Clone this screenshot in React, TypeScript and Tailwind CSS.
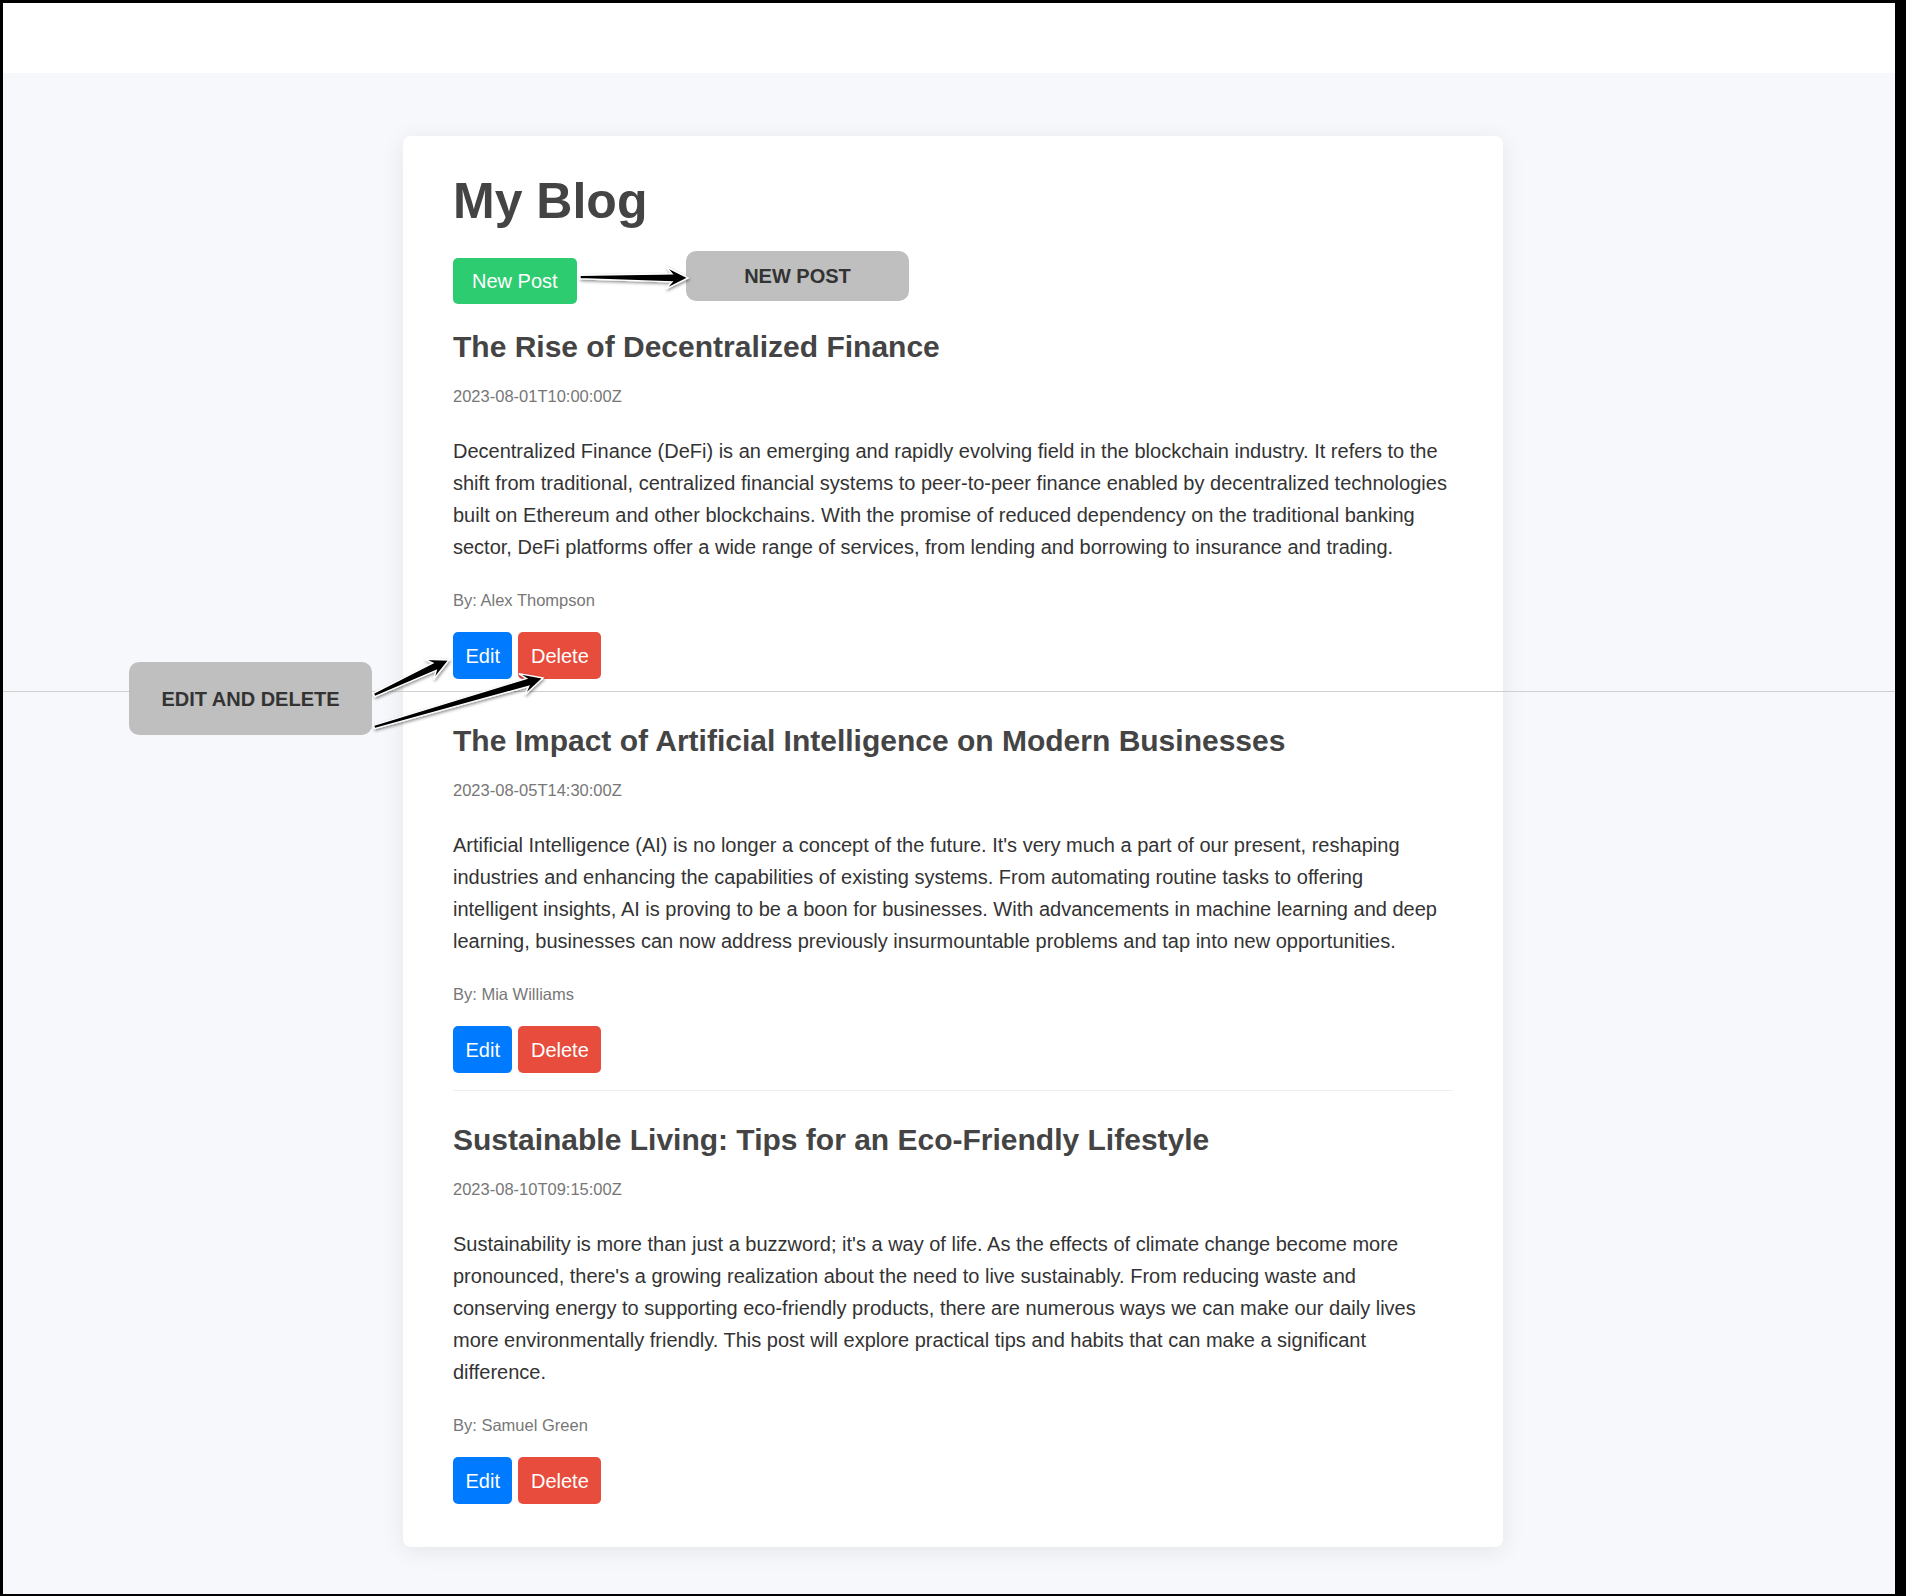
import type { ReactNode } from 'react';

interface Post {
  id: number;
  title: string;
  date: string;
  content: string;
  author: string;
}

const posts: Post[] = [
  {
    id: 1,
    title: 'The Rise of Decentralized Finance',
    date: '2023-08-01T10:00:00Z',
    content:
      'Decentralized Finance (DeFi) is an emerging and rapidly evolving field in the blockchain industry. It refers to the shift from traditional, centralized financial systems to peer-to-peer finance enabled by decentralized technologies built on Ethereum and other blockchains. With the promise of reduced dependency on the traditional banking sector, DeFi platforms offer a wide range of services, from lending and borrowing to insurance and trading.',
    author: 'Alex Thompson',
  },
  {
    id: 2,
    title: 'The Impact of Artificial Intelligence on Modern Businesses',
    date: '2023-08-05T14:30:00Z',
    content:
      "Artificial Intelligence (AI) is no longer a concept of the future. It's very much a part of our present, reshaping industries and enhancing the capabilities of existing systems. From automating routine tasks to offering intelligent insights, AI is proving to be a boon for businesses. With advancements in machine learning and deep learning, businesses can now address previously insurmountable problems and tap into new opportunities.",
    author: 'Mia Williams',
  },
  {
    id: 3,
    title: 'Sustainable Living: Tips for an Eco-Friendly Lifestyle',
    date: '2023-08-10T09:15:00Z',
    content:
      "Sustainability is more than just a buzzword; it's a way of life. As the effects of climate change become more pronounced, there's a growing realization about the need to live sustainably. From reducing waste and conserving energy to supporting eco-friendly products, there are numerous ways we can make our daily lives more environmentally friendly. This post will explore practical tips and habits that can make a significant difference.",
    author: 'Samuel Green',
  },
];

// tapered callout arrow, tail -> tip
function arrowPoints(x1: number, y1: number, x2: number, y2: number) {
  const dx = x2 - x1;
  const dy = y2 - y1;
  const len = Math.hypot(dx, dy);
  const ux = dx / len;
  const uy = dy / len;
  const vx = -uy;
  const vy = ux;
  const hl = 22;
  const hw = 11;
  const notch = 6;
  const wt = 1.8;
  const ws = 4;
  const pts: [number, number][] = [
    [0, -wt],
    [len - hl + notch, -ws],
    [len - hl, -hw],
    [len, 0],
    [len - hl, hw],
    [len - hl + notch, ws],
    [0, wt],
  ];
  return pts
    .map(([u, v]) => `${(x1 + ux * u + vx * v).toFixed(1)},${(y1 + uy * u + vy * v).toFixed(1)}`)
    .join(' ');
}

function Callout({ className, children }: { className: string; children: ReactNode }) {
  return (
    <div
      className={`absolute flex items-center justify-center rounded-[10px] bg-[#bfbfbf] text-[20px] font-bold text-[#333] ${className}`}
    >
      {children}
    </div>
  );
}

function PostItem({ post, first, last }: { post: Post; first: boolean; last: boolean }) {
  return (
    <article
      className={
        last ? '' : `${first ? 'pb-[12px] mb-[31px]' : 'pb-[17px] mb-[31px]'} border-b border-[#eee]`
      }
    >
      <h2 className="text-[30px] leading-[36px] font-bold text-[#444]">{post.title}</h2>
      <p className="mt-[21px] text-[16.5px] leading-[20px] text-[#777]">{post.date}</p>
      <p className="mt-[29px] text-[20px] leading-[32px] text-[#333]">{post.content}</p>
      <p className="mt-[27px] text-[16.5px] leading-[20px] text-[#777]">By: {post.author}</p>
      <div className="mt-[22px] flex gap-[6px]">
        <button
          type="button"
          className="h-[47px] px-[12.5px] rounded-[5px] bg-[#007bff] text-white text-[20px]"
        >
          Edit
        </button>
        <button
          type="button"
          className="h-[47px] px-[12.5px] rounded-[5px] bg-[#e74c3c] text-white text-[20px]"
        >
          Delete
        </button>
      </div>
    </article>
  );
}

export default function App() {
  return (
    <div className="relative w-full min-h-[1596px] bg-[#f7f8fb] font-['Liberation_Sans',Arial,sans-serif]">
      <div className="h-[73px] bg-white" />

      <div className="flex justify-center pt-[63px] pb-[50px]">
        <main className="w-[1100px] bg-white rounded-[8px] shadow-[0_4px_24px_rgba(0,0,0,0.08)] px-[50px] pt-[36px] pb-[43px]">
          <h1 className="text-[50px] leading-[58px] font-bold text-[#444]">My Blog</h1>
          <button
            type="button"
            className="mt-[28px] h-[46px] px-[19px] rounded-[5px] bg-[#2ecc71] text-white text-[20px]"
          >
            New Post
          </button>
          <div className="mt-[25px]">
            {posts.map((p, i) => (
              <PostItem key={p.id} post={p} first={i === 0} last={i === posts.length - 1} />
            ))}
          </div>
        </main>
      </div>

      {/* annotation layer */}
      <div className="pointer-events-none absolute left-[3px] right-[11px] top-[691px] h-px bg-[#cfcfcf]" />
      <Callout className="left-[686px] top-[251px] w-[223px] h-[50px]">NEW POST</Callout>
      <Callout className="left-[129px] top-[662px] w-[243px] h-[73px]">EDIT AND DELETE</Callout>
      <svg
        className="pointer-events-none absolute left-0 top-0"
        width={1906}
        height={1596}
        viewBox="0 0 1906 1596"
      >
        <defs>
          <filter id="arrowShadow" x="-20%" y="-50%" width="140%" height="200%">
            <feDropShadow dx="1" dy="1.5" stdDeviation="1.5" floodColor="#000" floodOpacity="0.45" />
          </filter>
        </defs>
        <g fill="#000" stroke="#fff" strokeWidth={1.4} strokeLinejoin="miter" filter="url(#arrowShadow)">
          <polygon points={arrowPoints(580, 277, 688, 278)} />
          <polygon points={arrowPoints(374, 695, 449, 660)} />
          <polygon points={arrowPoints(374, 727, 543, 678)} />
        </g>
      </svg>

      {/* screenshot frame */}
      <div className="pointer-events-none absolute inset-0 border-t-[3px] border-l-[3px] border-b-[3px] border-r-[11px] border-black" />
    </div>
  );
}
